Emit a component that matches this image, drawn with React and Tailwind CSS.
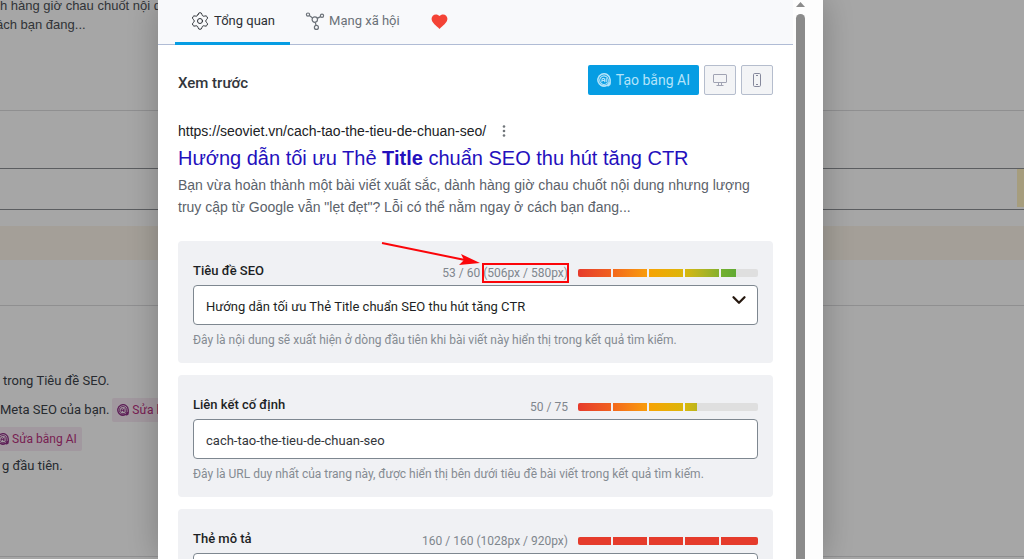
import { useState } from 'react'
import { Settings, ChevronDown } from 'lucide-react'
import { MdFavorite } from 'react-icons/md'

const SEGMENTS = [
  'w-[33px] bg-linear-to-r from-[#e63a2b] to-[#f0601f]',
  'w-[34px] bg-linear-to-r from-[#f3671b] to-[#f89c0a]',
  'w-[34px] bg-linear-to-r from-[#f7a304] to-[#dcb50a]',
  'w-[34px] bg-linear-to-r from-[#d8b70a] to-[#85b02c]',
  'w-[37px] bg-linear-to-r from-[#74b02f] to-[#3fa037]',
]

const OVER_SEGMENTS = [
  'w-[33px] bg-[#e53b2b]',
  'w-[34px] bg-[#e53b2b]',
  'w-[34px] bg-[#e53b2b]',
  'w-[34px] bg-[#e53b2b]',
  'w-[37px] bg-[#e53b2b]',
]

function AiIcon({ className }) {
  return (
    <svg viewBox="0 0 16 16" fill="none" stroke="currentColor" strokeLinecap="round" className={className}>
      <path strokeWidth="1.8" d="M14.2 11.2A7 7 0 1 1 15 7.6v4c0 1.4-.8 2.6-2.2 2.9" />
      <path strokeWidth="1.2" d="M11.7 11.4A4.900 4.900 0 1 1 12.8 7.4v4M4.4 14c1.6 1 4.6 1.1 6.4.2" />
      <path strokeWidth="1.2" d="M5.6 10V7.8C5.6 5.6 8.8 5.6 8.8 7.8V10M5.6 8.5h3.2M10.6 6.3V10" />
    </svg>
  )
}

function NetworkIcon() {
  return (
    <svg viewBox="0 0 20 20" fill="none" stroke="currentColor" strokeWidth="1.2" className="size-5">
      <circle cx="3" cy="3.6" r="1.6" />
      <circle cx="17" cy="4.8" r="1.6" />
      <circle cx="9.8" cy="8.6" r="2.7" />
      <circle cx="11.4" cy="16.4" r="2" />
      <path d="M4.3 4.6 7.6 7M15.6 5.6 12.2 7.4M10.3 11.3l.7 3.1" />
    </svg>
  )
}

function DesktopIcon() {
  return (
    <svg viewBox="0 0 16 16" fill="none" stroke="currentColor" className="size-4">
      <rect x="1.5" y="2.5" width="13" height="8" rx="0.5" />
      <path d="M6.5 10.5v3M9.5 10.5v3M4.5 13.5h7" />
    </svg>
  )
}

function PhoneIcon() {
  return (
    <svg viewBox="0 0 16 16" fill="none" stroke="currentColor" className="size-4">
      <rect x="4.5" y="1.5" width="7" height="13" rx="1.2" />
      <path d="M7 3.5h2M7 12.5h2" />
    </svg>
  )
}

function LengthBar({ percent, over }) {
  return (
    <div
      role="meter"
      aria-label="Độ dài"
      aria-valuenow={percent}
      className="w-[180px] h-2 rounded-xs bg-[#dfdfdf] overflow-hidden"
    >
      <div className="h-full overflow-hidden bg-[#f0f1f4]" style={{ width: `${percent}%` }}>
        <div className="flex gap-0.5 w-[180px] h-full">
          {(over ? OVER_SEGMENTS : SEGMENTS).map((segment, i) => (
            <span key={i} className={`shrink-0 ${segment}`} />
          ))}
        </div>
      </div>
    </div>
  )
}

function Field({ id, label, counter, percent, over, hint, children }) {
  return (
    <section className="rounded bg-[#f0f1f4] px-[15px] pt-4 pb-[13px]">
      <div className="flex items-center justify-between h-7">
        <label htmlFor={id} className="text-[13px] font-medium text-[#1d1f24]">{label}</label>
        <div className="flex items-center gap-[10px] pt-1">
          <span className="text-xs text-[#7f868d]">{counter}</span>
          <LengthBar percent={percent} over={over} />
        </div>
      </div>
      {children}
      <p className="mt-[5px] text-xs leading-5 text-[#858b92]">{hint}</p>
    </section>
  )
}

// Pixel width readout, pointed at by a red marker
function MarkedWidth({ children }) {
  return (
    <span className="relative inline-block">
      {children}
      <span className="absolute -inset-x-px -inset-y-0.5 border-2 border-[#fb0509]" />
      <svg viewBox="0 0 104 30" className="absolute right-full bottom-full w-[104px] h-[30px]">
        <path d="M3 8 86 25" stroke="#fb0509" strokeWidth="2" />
        <path d="M101 28 80 30 85 25 82 19Z" fill="#fb0509" />
      </svg>
    </span>
  )
}

function FixButton() {
  return (
    <button type="button" className="flex items-center gap-[3px] h-6 px-[5px] rounded-xs bg-[#f8eaf4] text-xs text-[#b8307f]">
      <AiIcon className="size-3 text-[#8f2f86]" />
      Sửa bằng AI
    </button>
  )
}

function EditorPage() {
  return (
    <main className="h-screen overflow-hidden bg-white">
      <div className="flow-root h-[111px] border-b border-[#dcdcde] font-['Liberation_Sans',sans-serif] text-[13px] leading-[19px] text-[#4d5156] whitespace-nowrap">
        <p className="-mt-1">h hàng giờ chau chuốt nội dung</p>
        <p className="-ml-1">ách bạn đang...</p>
      </div>
      <div className="mt-[57px] h-[42px] border-y border-[#8c8f94] flex justify-end">
        <span className="w-[7px] h-[38px] bg-[#fff2c0]" />
      </div>
      <div className="mt-4 h-[34px] bg-[#fcf5ea]" />
      <div className="h-[46px] border-b border-[#dcdcde]" />
      <ul className="h-[251px] border-b border-[#dcdcde] pt-[60px] text-[13px] text-[#3c434a] whitespace-nowrap">
        <li className="flex items-center h-[29px] pl-[3px]">trong Tiêu đề SEO.</li>
        <li className="flex items-center h-[29px] gap-[3px]">
          Meta SEO của bạn. <FixButton />
        </li>
        <li className="flex items-center h-[29px] -ml-2"><FixButton /></li>
        <li className="flex items-center h-[26px] pl-0.5">g đầu tiên.</li>
      </ul>
    </main>
  )
}

export default function App() {
  const [tab, setTab] = useState('general')
  const [slug, setSlug] = useState('cach-tao-the-tieu-de-chuan-seo')
  const [description, setDescription] = useState('')

  return (
    <div className="font-[Roboto,sans-serif]">
      <EditorPage />

      <div className="fixed inset-0 flex justify-center overflow-hidden bg-black/35 pr-[43px]">
        <div role="dialog" aria-label="SEO" className="flex w-full max-w-[665px] bg-[#fdfdfd] shadow-[0_0_32px_rgba(0,0,0,0.25)]">
          <div className="flex-1 min-w-0 bg-white">
            <nav className="flex h-[45px] pl-[17px] border-b border-[#b0bcd5] bg-[#f8f9fb] text-[13px]">
              <button
                type="button"
                onClick={() => setTab('general')}
                className={`flex items-center gap-1 h-[45px] px-[15px] border-b-3 ${
                  tab === 'general' ? 'border-[#069de3] text-[#2c3035]' : 'border-transparent text-[#6b7178]'
                }`}
              >
                <Settings size={20} strokeWidth={1.2} />
                Tổng quan
              </button>
              <button
                type="button"
                onClick={() => setTab('social')}
                className={`flex items-center gap-1 h-[45px] px-[15px] border-b-3 ${
                  tab === 'social' ? 'border-[#069de3] text-[#2c3035]' : 'border-transparent text-[#6b7178]'
                }`}
              >
                <NetworkIcon />
                Mạng xã hội
              </button>
              <button type="button" aria-label="Yêu thích" className="flex items-center h-[45px] px-[15px] border-b-3 border-transparent text-[#f44336]">
                <MdFavorite size={19} />
              </button>
            </nav>

            <div className="px-5 pt-5">
              <div className="flex items-center gap-[5px]">
                <h2 className="mr-auto pt-1.5 text-[15px] font-medium text-[#33363b]">Xem trước</h2>
                <button type="button" className="flex items-center gap-[5px] h-[30px] px-[9px] rounded-xs bg-[#069de3] text-sm text-[#b4e4fa]">
                  <AiIcon className="size-[14px]" />
                  Tạo bằng AI
                </button>
                <button type="button" aria-label="Máy tính" className="flex items-center justify-center w-8 h-[30px] rounded-xs border border-[#b5bdcd] bg-[#f3f4f6] text-[#a0a3b3]">
                  <DesktopIcon />
                </button>
                <button type="button" aria-label="Điện thoại" className="flex items-center justify-center w-8 h-[30px] rounded-xs border border-[#b5bdcd] bg-[#f3f4f6] text-[#85889c]">
                  <PhoneIcon />
                </button>
              </div>

              <div className="mt-6 font-['Liberation_Sans',sans-serif]">
                <div className="flex items-center gap-4 h-6 text-sm text-[#202124]">
                  https://seoviet.vn/cach-tao-the-tieu-de-chuan-seo/
                  <svg viewBox="0 0 4 12" fill="#70757a" className="w-1 h-3">
                    <circle cx="2" cy="1.5" r="1.3" />
                    <circle cx="2" cy="6" r="1.3" />
                    <circle cx="2" cy="10.5" r="1.3" />
                  </svg>
                </div>
                <h3 className="text-xl leading-[31px] text-[#2410bd]">
                  Hướng dẫn tối ưu Thẻ <b>Title</b> chuẩn SEO thu hút tăng CTR
                </h3>
                <p className="text-sm leading-[22px] text-[#5b626a]">
                  Bạn vừa hoàn thành một bài viết xuất sắc, dành hàng giờ chau chuốt nội dung nhưng lượng truy cập từ Google vẫn "lẹt đẹt"? Lỗi có thể nằm ngay ở cách bạn đang...
                </p>
              </div>

              <div className="mt-[23px] flex flex-col gap-3">
                <Field
                  id="title"
                  label="Tiêu đề SEO"
                  counter={<>53 / 60 <MarkedWidth>(506px / 580px)</MarkedWidth></>}
                  percent={88}
                  hint="Đây là nội dung sẽ xuất hiện ở dòng đầu tiên khi bài viết này hiển thị trong kết quả tìm kiếm."
                >
                  <div className="relative">
                    <select id="title" className="block appearance-none w-full h-10 px-3 pt-[3px] rounded border border-[#7e8790] bg-white text-[13px] text-[#1d1f24]">
                      <option>Hướng dẫn tối ưu Thẻ Title chuẩn SEO thu hút tăng CTR</option>
                    </select>
                    <ChevronDown size={22} strokeWidth={2.5} className="absolute right-2 top-1 text-[#26180f] pointer-events-none" />
                  </div>
                </Field>
                <Field
                  id="slug"
                  label="Liên kết cố định"
                  counter="50 / 75"
                  percent={66}
                  hint="Đây là URL duy nhất của trang này, được hiển thị bên dưới tiêu đề bài viết trong kết quả tìm kiếm."
                >
                  <input
                    id="slug"
                    type="text"
                    value={slug}
                    onChange={e => setSlug(e.target.value)}
                    className="block w-full h-10 px-3 pt-[3px] rounded border border-[#7e8790] bg-white text-[13px] text-[#33363b]"
                  />
                </Field>
                <Field
                  id="description"
                  label="Thẻ mô tả"
                  counter="160 / 160 (1028px / 920px)"
                  percent={100}
                  over
                >
                  <textarea
                    id="description"
                    rows={4}
                    value={description}
                    onChange={e => setDescription(e.target.value)}
                    className="block w-full px-3 rounded border border-[#7e8790] bg-white text-[13px]"
                  />
                </Field>
              </div>
            </div>
          </div>

          <div className="flex flex-col items-center gap-[7px] w-[15px] mr-[15px] pt-0.5">
            <svg viewBox="0 0 9 5" fill="#8b8b8b" className="w-[9px] h-[5px] shrink-0">
              <path d="M4.5 0 9 5H0Z" />
            </svg>
            <span className="w-[9px] flex-1 rounded-t-full bg-[#8b8b8b]" />
          </div>
        </div>
      </div>
    </div>
  )
}
